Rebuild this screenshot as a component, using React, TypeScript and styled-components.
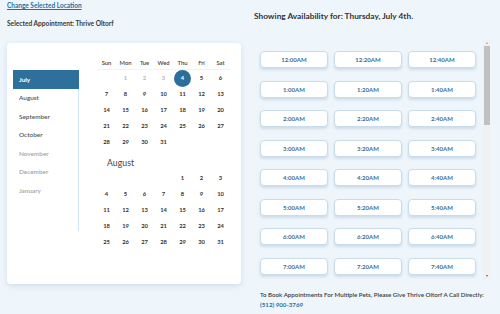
import React from "react";
import styled, { createGlobalStyle } from "styled-components";

const Global = createGlobalStyle`
  html, body { margin: 0; padding: 0; }
  body {
    background: #eef6fc;
    font-family: Lato, "Open Sans", sans-serif;
    color: #333;
    width: 500px;
    height: 314px;
    overflow: hidden;
  }
`;

const Page = styled.div`
  display: flex;
  padding: 0 0 0 7px;
  width: 500px;
  height: 314px;
  box-sizing: border-box;
`;

const LeftCol = styled.div`
  width: 234px;
  display: flex;
  flex-direction: column;
`;

const ChangeLink = styled.a`
  display: block;
  margin-top: 2px;
  font-size: 6.5px;
  font-weight: 700;
  color: #2b6f9e;
  text-decoration: underline;
  line-height: 8px;
`;

const SelectedText = styled.div`
  margin-top: 9px;
  font-size: 6.6px;
  font-weight: 700;
  color: #3a3a3a;
  line-height: 8px;
`;

const Card = styled.div`
  margin-top: 16px;
  height: 241px;
  background: #fff;
  border-radius: 4px;
  box-shadow: 0 2px 6px rgba(40, 70, 100, 0.14);
  display: flex;
  box-sizing: border-box;
  padding: 0 0 0 6px;
`;

const MonthList = styled.div`
  margin-top: 27px;
  width: 65px;
  height: 161px;
  border-right: 1px solid #cfe9f6;
  display: flex;
  flex-direction: column;
`;

const MonthItem = styled.div<{ $active?: boolean; $muted?: boolean }>`
  height: 18.5px;
  display: flex;
  align-items: center;
  padding-left: 6px;
  font-size: 6.4px;
  font-weight: ${(p) => (p.$active ? 700 : 600)};
  color: ${(p) => (p.$active ? "#fff" : p.$muted ? "#a3a3a3" : "#555")};
  background: ${(p) => (p.$active ? "#2e709c" : "transparent")};
  margin-right: ${(p) => (p.$active ? "-1px" : "0")};
`;

const Calendars = styled.div`
  margin-left: 18px;
  padding-top: 13px;
  width: 133px;
  display: flex;
  flex-direction: column;
`;

const WeekHeader = styled.div`
  display: grid;
  grid-template-columns: repeat(7, 19px);
  height: 13px;
  border-bottom: 1px solid #eef3f7;
  align-items: center;
`;

const HeadCell = styled.div`
  text-align: center;
  font-size: 5.8px;
  font-weight: 600;
  color: #444;
`;

const DayGrid = styled.div`
  display: grid;
  grid-template-columns: repeat(7, 19px);
  grid-auto-rows: 15.8px;
`;

const DayCell = styled.div<{ $disabled?: boolean; $selected?: boolean }>`
  position: relative;
  display: flex;
  align-items: center;
  justify-content: center;
  font-size: 5.8px;
  font-weight: 700;
  color: ${(p) => (p.$selected ? "#fff" : p.$disabled ? "#b4b4b4" : "#333")};
  z-index: 0;
  &::before {
    content: "";
    display: ${(p) => (p.$selected ? "block" : "none")};
    position: absolute;
    left: 1px;
    top: -0.5px;
    width: 17px;
    height: 17px;
    border-radius: 50%;
    background: #2b6e9c;
    z-index: -1;
  }
`;

const MonthTitle = styled.div`
  height: 14px;
  margin-top: 7px;
  padding-left: 10px;
  display: flex;
  align-items: center;
  font-size: 8.6px;
  font-weight: 400;
  color: #444;
  letter-spacing: 0.1px;
`;

const RightCol = styled.div`
  margin-left: 13px;
  display: flex;
  flex-direction: column;
`;

const Heading = styled.div`
  margin-top: 12px;
  font-size: 8.3px;
  font-weight: 700;
  color: #333;
  line-height: 9px;
`;

const SlotsPanel = styled.div`
  margin-top: 19px;
  margin-left: 3px;
  width: 233px;
  height: 239px;
  display: flex;
`;

const SlotsViewport = styled.div`
  flex: 1;
  overflow: hidden;
`;

const ScrollTrack = styled.div`
  width: 7px;
  background: #f1f1f1;
  display: flex;
  flex-direction: column;
  align-items: stretch;
`;

const ScrollArrow = styled.div<{ $down?: boolean }>`
  height: 6px;
  display: flex;
  align-items: center;
  justify-content: center;
  &::after {
    content: "";
    width: 0;
    height: 0;
    border-left: 1.5px solid transparent;
    border-right: 1.5px solid transparent;
    ${(p) =>
      p.$down
        ? "border-top: 2px solid #6a6a6a;"
        : "border-bottom: 2px solid #a0a0a0;"}
  }
`;

const ScrollSpace = styled.div`
  flex: 1;
  position: relative;
`;

const ScrollThumb = styled.div`
  position: absolute;
  left: 0.5px;
  right: 0.5px;
  background: #c1c1c1;
`;

const SlotGrid = styled.div`
  display: grid;
  grid-template-columns: repeat(3, 68px);
  column-gap: 6px;
  row-gap: 12.5px;
  padding: 11px 0 12px 3px;
`;

const SlotButton = styled.button`
  height: 17px;
  padding: 0;
  background: #fff;
  border: 1px solid #c9dce9;
  border-radius: 4px;
  box-shadow: 0 2px 3px rgba(60, 100, 140, 0.18);
  font-family: Lato, "Open Sans", sans-serif;
  font-size: 6px;
  font-weight: 700;
  color: #3a6f98;
  cursor: pointer;
`;

const Footer = styled.div`
  margin-top: 11px;
  margin-left: 6px;
  font-size: 6.2px;
  font-weight: 600;
  color: #3a3a3a;
  line-height: 9.5px;
  white-space: nowrap;
`;

const Phone = styled.div`
  color: #2b6f9e;
  font-weight: 700;
`;

const weekdays = ["Sun", "Mon", "Tue", "Wed", "Thu", "Fri", "Sat"];
const months = [
  { name: "July", active: true },
  { name: "August" },
  { name: "September" },
  { name: "October" },
  { name: "November", muted: true },
  { name: "December", muted: true },
  { name: "January", muted: true },
];

function buildDays(offset: number, count: number) {
  const cells: (number | null)[] = [];
  for (let i = 0; i < offset; i++) cells.push(null);
  for (let d = 1; d <= count; d++) cells.push(d);
  return cells;
}

const july = buildDays(1, 31);
const august = buildDays(4, 31);

const HOURS = 23;
const slots: string[] = [];
for (let h = 0; h < HOURS; h++) {
  const hr = h % 12 === 0 ? 12 : h % 12;
  const suf = h < 12 ? "AM" : "PM";
  for (const m of ["00", "20", "40"]) slots.push(`${hr}:${m}${suf}`);
}

const viewportH = 239;
const contentH = 11 + HOURS * 17 + (HOURS - 1) * 12.5 + 12;
const trackH = viewportH - 12;
const thumbH = (viewportH / contentH) * trackH;

export default function App() {
  return (
    <>
      <Global />
      <Page>
        <LeftCol>
          <ChangeLink href="#">Change Selected Location</ChangeLink>
          <SelectedText>Selected Appointment: Thrive Oltorf</SelectedText>
          <Card>
            <MonthList>
              {months.map((m) => (
                <MonthItem key={m.name} $active={m.active} $muted={m.muted}>
                  {m.name}
                </MonthItem>
              ))}
            </MonthList>
            <Calendars>
              <WeekHeader>
                {weekdays.map((w) => (
                  <HeadCell key={w}>{w}</HeadCell>
                ))}
              </WeekHeader>
              <DayGrid>
                {july.map((d, i) => (
                  <DayCell key={i} $disabled={d !== null && d < 4} $selected={d === 4}>
                    {d ?? ""}
                  </DayCell>
                ))}
              </DayGrid>
              <MonthTitle>August</MonthTitle>
              <DayGrid>
                {august.map((d, i) => (
                  <DayCell key={i}>{d ?? ""}</DayCell>
                ))}
              </DayGrid>
            </Calendars>
          </Card>
        </LeftCol>
        <RightCol>
          <Heading>Showing Availability for: Thursday, July 4th.</Heading>
          <SlotsPanel>
            <SlotsViewport>
              <SlotGrid>
                {slots.map((s) => (
                  <SlotButton key={s}>{s}</SlotButton>
                ))}
              </SlotGrid>
            </SlotsViewport>
            <ScrollTrack>
              <ScrollArrow />
              <ScrollSpace>
                <ScrollThumb style={{ top: 0, height: thumbH }} />
              </ScrollSpace>
              <ScrollArrow $down />
            </ScrollTrack>
          </SlotsPanel>
          <Footer>
            To Book Appointments For Multiple Pets, Please Give Thrive Oltorf A Call Directly:
            <Phone>(512) 900-3769</Phone>
          </Footer>
        </RightCol>
      </Page>
    </>
  );
}
